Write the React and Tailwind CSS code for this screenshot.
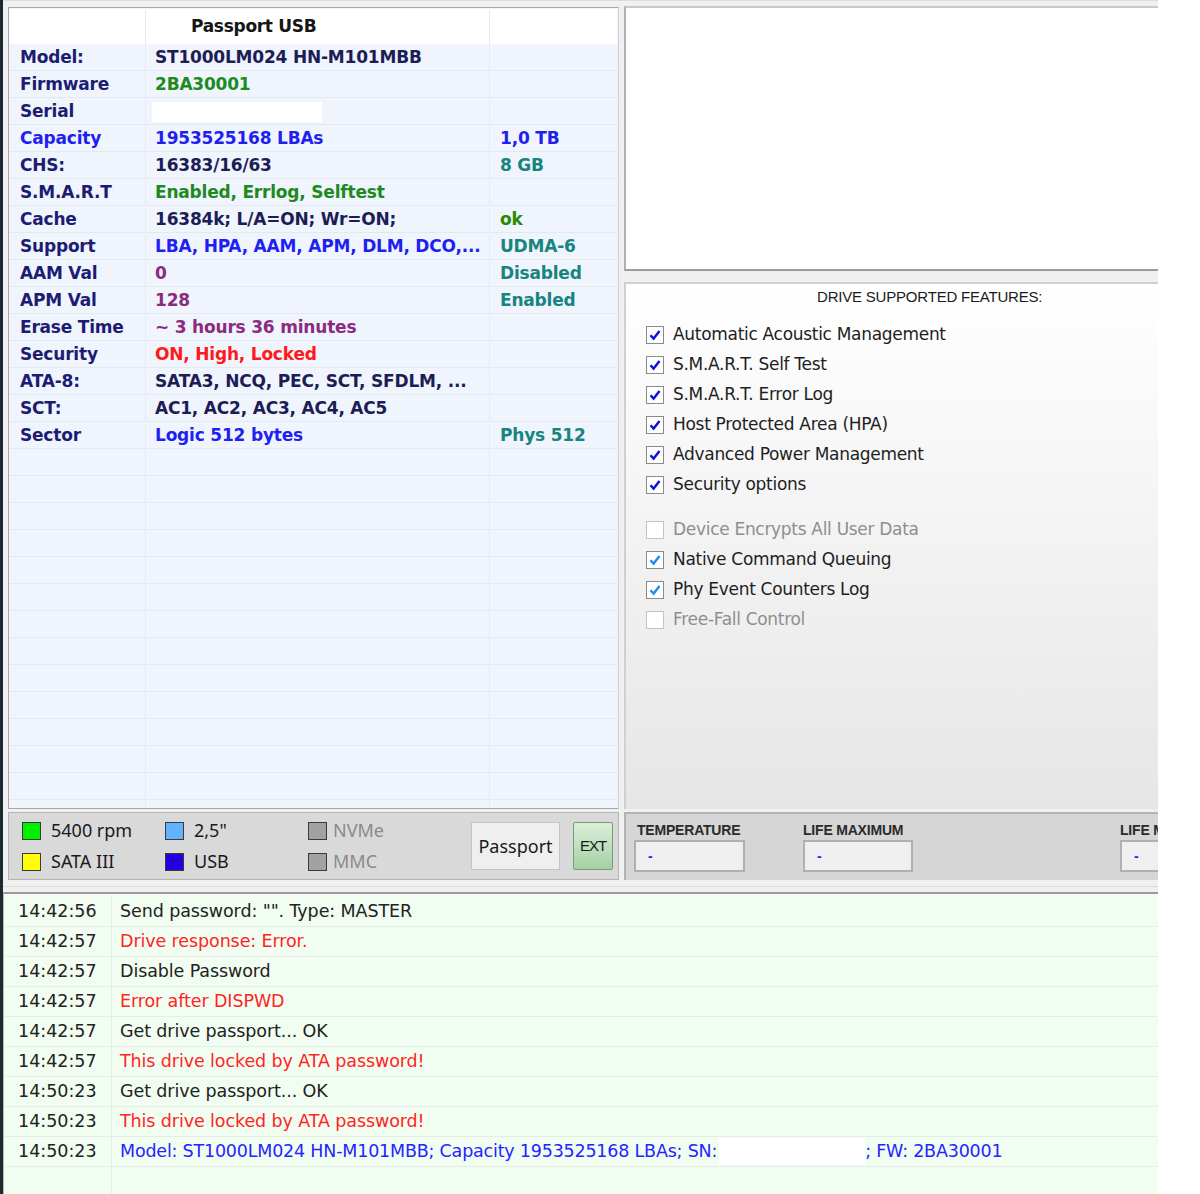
import React from 'react'

const LABEL = 'text-[#1c1c72]'
const BLUE = 'text-[#1f1ff0]'
const DARK = 'text-[#1d1d55]'
const GREEN = 'text-[#1c8a1c]'
const TEAL = 'text-[#178480]'
const PURPLE = 'text-[#8c2a7e]'
const RED = 'text-[#ff1a1a]'

const rows = [
  { label: 'Model:', lc: LABEL, value: 'ST1000LM024 HN-M101MBB', vc: DARK },
  { label: 'Firmware', lc: LABEL, value: '2BA30001', vc: GREEN },
  { label: 'Serial', lc: LABEL, value: null },
  { label: 'Capacity', lc: BLUE, value: '1953525168 LBAs', vc: BLUE, extra: '1,0 TB', ec: BLUE },
  { label: 'CHS:', lc: LABEL, value: '16383/16/63', vc: DARK, extra: '8 GB', ec: TEAL },
  { label: 'S.M.A.R.T', lc: LABEL, value: 'Enabled, Errlog, Selftest', vc: GREEN },
  { label: 'Cache', lc: LABEL, value: '16384k; L/A=ON; Wr=ON;', vc: DARK, extra: 'ok', ec: 'text-[#2a8a00]' },
  { label: 'Support', lc: LABEL, value: 'LBA, HPA, AAM, APM, DLM, DCO,...', vc: BLUE, extra: 'UDMA-6', ec: TEAL },
  { label: 'AAM Val', lc: LABEL, value: '0', vc: PURPLE, extra: 'Disabled', ec: TEAL },
  { label: 'APM Val', lc: LABEL, value: '128', vc: PURPLE, extra: 'Enabled', ec: TEAL },
  { label: 'Erase Time', lc: LABEL, value: '~ 3 hours 36 minutes', vc: PURPLE },
  { label: 'Security', lc: LABEL, value: 'ON, High, Locked', vc: RED },
  { label: 'ATA-8:', lc: LABEL, value: 'SATA3, NCQ, PEC, SCT, SFDLM, ...', vc: DARK },
  { label: 'SCT:', lc: LABEL, value: 'AC1, AC2, AC3, AC4, AC5', vc: DARK },
  { label: 'Sector', lc: LABEL, value: 'Logic 512 bytes', vc: BLUE, extra: 'Phys 512', ec: TEAL },
]

const emptyRows = Array.from({ length: 14 })

const features = [
  { text: 'Automatic Acoustic Management', on: true, tone: 'dark' },
  { text: 'S.M.A.R.T. Self Test', on: true, tone: 'dark' },
  { text: 'S.M.A.R.T. Error Log', on: true, tone: 'dark' },
  { text: 'Host Protected Area (HPA)', on: true, tone: 'dark' },
  { text: 'Advanced Power Management', on: true, tone: 'dark' },
  { text: 'Security options', on: true, tone: 'dark' },
]

const features2 = [
  { text: 'Device Encrypts All User Data', on: false },
  { text: 'Native Command Queuing', on: true, tone: 'light' },
  { text: 'Phy Event Counters Log', on: true, tone: 'light' },
  { text: 'Free-Fall Control', on: false },
]

const log = [
  { t: '14:42:56', m: 'Send password: "". Type: MASTER', c: 'text-[#222222]' },
  { t: '14:42:57', m: 'Drive response: Error.', c: 'text-[#ff2424]' },
  { t: '14:42:57', m: 'Disable Password', c: 'text-[#222222]' },
  { t: '14:42:57', m: 'Error after DISPWD', c: 'text-[#ff2424]' },
  { t: '14:42:57', m: 'Get drive passport... OK', c: 'text-[#222222]' },
  { t: '14:42:57', m: 'This drive locked by ATA password!', c: 'text-[#ff2424]' },
  { t: '14:50:23', m: 'Get drive passport... OK', c: 'text-[#222222]' },
  { t: '14:50:23', m: 'This drive locked by ATA password!', c: 'text-[#ff2424]' },
]

function CheckBox({ on, tone }) {
  return (
    <div
      className={`w-[18px] h-[18px] shrink-0 border bg-white flex items-center justify-center ${
        on ? 'border-[#8a8a8a]' : 'border-[#c4c4c4]'
      }`}
    >
      {on && (
        <svg width="14" height="14" viewBox="0 0 14 14">
          <path
            d="M2.5 7.2 L5.6 10.6 L11.5 3"
            fill="none"
            stroke={tone === 'light' ? '#1f8cf0' : '#1010d8'}
            strokeWidth="2.4"
          />
        </svg>
      )}
    </div>
  )
}

function Swatch({ color, text, muted }) {
  return (
    <div className="flex items-center h-[31px]">
      <div className={`w-[19px] h-[18px] border border-[#3a3a3a] ${color}`} />
      <span className={muted ? 'ml-[6px] text-[#8a8a8a]' : 'ml-[10px] text-[#1a1a1a]'}>{text}</span>
    </div>
  )
}

export default function App() {
  return (
    <div className="w-[1200px] h-[1194px] bg-white flex overflow-hidden">
      <div className="w-[3px] h-full shrink-0 bg-[#1c2a30]" />
      <div className="w-[1155px] h-full shrink-0 bg-[#f0f0f0] flex flex-col overflow-hidden">
        {/* upper area */}
        <div className="flex pt-[5px] pl-[5px] h-[880px] border-t border-[#dcdcdc] overflow-hidden">
          {/* left column */}
          <div className="w-[611px] shrink-0 flex flex-col">
            <div
              className="h-[803px] mt-px border border-[#a8a8a8] border-r-[#d0d0d0] bg-[#eff4fd] overflow-hidden p-px"
              style={{ fontFamily: '"DejaVu Sans", Verdana, sans-serif' }}
            >
              <div className="flex h-[35px] pt-px bg-white font-bold text-[17px] text-[#151515]">
                <div className="w-[136px] border-r border-[#e6e9ee]" />
                <div className="w-[344px] border-r border-[#e6e9ee] pl-[45px] flex items-center tracking-[-0.3px]">Passport USB</div>
                <div className="flex-1" />
              </div>
              {rows.map((r) => (
                <div key={r.label} className="flex h-[27px] pt-[2px] border-b border-[#e4e8ef] font-bold text-[17px] tracking-[-0.2px]">
                  <div className={`w-[136px] border-r border-[#e6e9ee] pl-[10px] flex items-center ${r.lc}`}>{r.label}</div>
                  <div className={`w-[344px] border-r border-[#e6e9ee] pl-[9px] flex items-center whitespace-nowrap ${r.vc || ''}`}>
                    {r.value === null ? <div className="w-[170px] h-[20px] bg-white -ml-[3px]" /> : r.value}
                  </div>
                  <div className={`flex-1 pl-[10px] flex items-center ${r.ec || ''}`}>{r.extra}</div>
                </div>
              ))}
              {emptyRows.map((_, i) => (
                <div key={i} className="flex h-[27px] border-b border-[#e4e8ef]">
                  <div className="w-[136px] border-r border-[#e6e9ee]" />
                  <div className="w-[344px] border-r border-[#e6e9ee]" />
                  <div className="flex-1" />
                </div>
              ))}
            </div>

            {/* left status */}
            <div
              className="mt-[3px] h-[68px] bg-[#d9d9d9] border border-[#b4b4b4] flex items-center pl-[13px] text-[18px]"
              style={{ fontFamily: '"Noto Sans", "Open Sans", sans-serif' }}
            >
              <div className="w-[143px] flex flex-col">
                <Swatch color="bg-[#00f000]" text="5400 rpm" />
                <Swatch color="bg-[#ffff00]" text="SATA III" />
              </div>
              <div className="w-[143px] flex flex-col">
                <Swatch color="bg-[#62b2ff]" text='2,5"' />
                <Swatch color="bg-[#2200e0]" text="USB" />
              </div>
              <div className="w-[163px] flex flex-col">
                <Swatch color="bg-[#a2a2a2]" text="NVMe" muted />
                <Swatch color="bg-[#a2a2a2]" text="MMC" muted />
              </div>
              <div className="w-[89px] h-[48px] bg-[#efefef] border border-[#c4c4c4] flex items-center justify-center text-[18px] text-[#1a1a1a]">
                Passport
              </div>
              <div
                className="ml-[13px] w-[40px] h-[48px] rounded-[2px] border border-[#7a9a7a] bg-gradient-to-b from-[#d9efd9] to-[#a5d1a5] flex items-center justify-center text-[15px] tracking-[-1px] text-[#1a1a1a]"
                style={{ fontFamily: '"Liberation Sans", Arial, sans-serif' }}
              >
                EXT
              </div>
            </div>
          </div>

          {/* right column */}
          <div className="ml-[5px] w-[534px] shrink-0 min-w-0 flex flex-col overflow-hidden">
            <div className="h-[265px] bg-white border-l-2 border-t-2 border-b-2 border-l-[#b0b0b0] border-t-[#c8c8c8] border-b-[#9c9c9c]" />
            <div className="mt-[11px] h-[527px] border-l-2 border-t-2 border-[#d0d0d0] bg-gradient-to-b from-[#ffffff] to-[#e6e6e6]">
              <div
                className="pt-[2px] pl-[191px] text-[15px] tracking-[-0.2px] text-[#1a1a1a] whitespace-nowrap"
                style={{ fontFamily: '"Liberation Sans", Arial, sans-serif' }}
              >
                DRIVE SUPPORTED FEATURES:
              </div>
              <div
                className="mt-[11px] pl-[20px] flex flex-col text-[17px]"
                style={{ fontFamily: '"DejaVu Sans", Verdana, sans-serif' }}
              >
                {features.map((f) => (
                  <div key={f.text} className="h-[30px] flex items-center">
                    <CheckBox on={f.on} tone={f.tone} />
                    <span className="ml-[9px] text-[#1e1e1e] tracking-[-0.3px]">{f.text}</span>
                  </div>
                ))}
                <div className="h-[15px]" />
                {features2.map((f) => (
                  <div key={f.text} className="h-[30px] flex items-center">
                    <CheckBox on={f.on} tone={f.tone} />
                    <span className={`ml-[9px] tracking-[-0.3px] ${f.on ? 'text-[#1e1e1e]' : 'text-[#8e8e8e]'}`}>{f.text}</span>
                  </div>
                ))}
              </div>
            </div>

            {/* right status */}
            <div
              className="mt-[3px] h-[68px] bg-[#d6d6d6] border-l-2 border-t-2 border-[#b4b4b4] flex pt-[6px] pl-[8px] text-[14px] font-bold text-[#2a2a2a] tracking-[-0.2px]"
              style={{ fontFamily: '"Liberation Sans", Arial, sans-serif' }}
            >
              <div className="w-[169px] shrink-0 flex flex-col">
                <span className="pl-[3px] h-[20px]">TEMPERATURE</span>
                <div className="w-[111px] h-[32px] bg-[#efefef] border-2 border-[#b0b0b0] pl-[12px] flex items-center text-[#2020ff]">-</div>
              </div>
              <div className="w-[317px] shrink-0 flex flex-col">
                <span className="h-[20px]">LIFE MAXIMUM</span>
                <div className="w-[110px] h-[32px] bg-[#efefef] border-2 border-[#b0b0b0] pl-[12px] flex items-center text-[#2020ff]">-</div>
              </div>
              <div className="flex-1 min-w-0 flex flex-col overflow-hidden whitespace-nowrap">
                <span className="h-[20px]">LIFE MIN</span>
                <div className="w-[110px] h-[32px] bg-[#efefef] border-2 border-[#b0b0b0] pl-[12px] flex items-center text-[#2020ff]">-</div>
              </div>
            </div>
          </div>
        </div>

        {/* separator */}
        <div className="h-[12px] flex flex-col justify-center">
          <div className="h-px bg-[#dadada]" />
        </div>

        {/* log */}
        <div
          className="flex-1 pt-[3px] bg-[#f1fdf1] border-t-2 border-l border-t-[#9a9a9a] border-l-[#b8b8b8] overflow-hidden text-[17.5px]"
          style={{ fontFamily: '"DejaVu Sans", Verdana, sans-serif' }}
        >
          {log.map((l, i) => (
            <div key={i} className="flex h-[30px] border-b border-[#e6ede6]">
              <div className="w-[108px] border-r border-[#e6ede6] pl-[14px] flex items-center text-[#222222]">{l.t}</div>
              <div className={`flex-1 pl-[8px] flex items-center tracking-[-0.1px] ${l.c}`}>{l.m}</div>
            </div>
          ))}
          <div className="flex h-[30px] border-b border-[#e6ede6]">
            <div className="w-[108px] border-r border-[#e6ede6] pl-[14px] flex items-center text-[#222222]">14:50:23</div>
            <div className="flex-1 pl-[8px] flex items-center tracking-[-0.2px] text-[#2424ff] whitespace-nowrap">
              <span>Model: ST1000LM024 HN-M101MBB; Capacity 1953525168 LBAs; SN:</span>
              <span className="inline-block w-[146px] h-[27px] bg-white ml-[2px]" />
              <span>; FW: 2BA30001</span>
            </div>
          </div>
          <div className="flex h-[30px]">
            <div className="w-[108px] border-r border-[#e6ede6]" />
            <div className="flex-1" />
          </div>
        </div>
      </div>
    </div>
  )
}
